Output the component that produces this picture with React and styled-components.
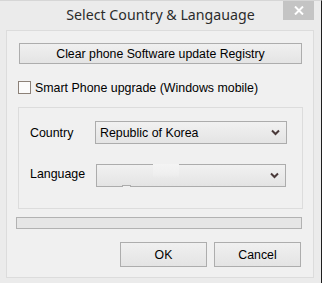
import React from "react"
import styled, { createGlobalStyle } from "styled-components"

const GlobalStyle = createGlobalStyle`
   html, body {
      margin: 0;
      padding: 0;
      background: #ebebeb;
   }
   body {
      font-family: "Liberation Sans", Arial, sans-serif;
      font-size: 12px;
      color: #000;
   }
`

const Window = styled.div`
   width: 322px;
   height: 283px;
   box-sizing: border-box;
   background: #ebebeb;
   border-top: 1px solid #d6d6d6;
   border-right: 1px solid #1e1e1e;
   display: flex;
   flex-direction: column;
`

const TitleBar = styled.div`
   height: 29px;
   display: grid;
   grid-template-columns: 1fr auto 1fr;
   align-items: start;
`

const Title = styled.div`
   grid-column: 2;
   font-family: "Noto Sans", "Open Sans", sans-serif;
   font-size: 14.2px;
   line-height: 20px;
   color: #2b2b2b;
   padding-top: 4px;
`

const CloseButton = styled.div`
   grid-column: 3;
   justify-self: end;
   margin-right: 7px;
   width: 31px;
   height: 19px;
   background: #c4c4c4;
   display: flex;
   align-items: center;
   justify-content: center;
`

const Panel = styled.div`
   margin-left: 6px;
   width: 308px;
   height: 248px;
   box-sizing: border-box;
   background: #f0f0f0;
   border: 1px solid #dcdcdc;
   display: flex;
   flex-direction: column;
`

const Button = styled.div`
   box-sizing: border-box;
   width: ${(p) => p.$w}px;
   height: ${(p) => p.$h}px;
   border: 1px solid #adadad;
   background: linear-gradient(#f0f0f0, #e4e4e4);
   display: flex;
   align-items: center;
   justify-content: center;
   font-size: 12.3px;
   color: #000;
`

const WideButton = styled(Button)`
   margin: 12px 0 0 12px;
`

const CheckRow = styled.label`
   margin: 17px 0 0 11px;
   display: flex;
   align-items: center;
   gap: 4px;
   height: 13px;
   font-size: 12.4px;
`

const Check = styled.span`
   width: 13px;
   height: 13px;
   box-sizing: border-box;
   border: 1px solid #8c8178;
   background: #fbfbfb;
`

const Group = styled.div`
   margin: 13px 0 0 11px;
   width: 285px;
   height: 102px;
   box-sizing: border-box;
   border: 1px solid #dcdcdc;
   display: flex;
   flex-direction: column;
   padding: 13px 0 0 11px;
   gap: 20px;
`

const FieldRow = styled.div`
   display: grid;
   grid-template-columns: ${(p) => p.$labelW}px auto;
   align-items: center;
`

const Label = styled.span`
   font-size: 12.4px;
   padding-bottom: ${(p) => p.$raise || 0}px;
`

const Select = styled.div`
   position: relative;
   box-sizing: border-box;
   width: ${(p) => p.$w}px;
   height: 23px;
   border: 1px solid #acacac;
   background: linear-gradient(#f1f1f1, #e4e4e4);
   display: flex;
   align-items: center;
   justify-content: space-between;
   padding: 0 6px 0 4px;
   font-size: 12.4px;
`

const BorderGap = styled.span`
   position: absolute;
   top: -1px;
   left: 56px;
   width: 26px;
   height: 14px;
   background: linear-gradient(#f4f4f4, #f0f0f0 60%, rgba(240, 240, 240, 0));
`

const Notch = styled.span`
   position: absolute;
   bottom: -1px;
   left: 25px;
   width: 9px;
   height: 2px;
   border-top: 1px solid #acacac;
   border-left: 1px solid #acacac;
   border-right: 1px solid #acacac;
   box-sizing: border-box;
   background: #f0f0f0;
`

const Progress = styled.div`
   margin: 8px 0 0 9px;
   width: 286px;
   height: 12px;
   box-sizing: border-box;
   border: 1px solid #b2b2b2;
   background: #e6e6e6;
`

const Footer = styled.div`
   margin: 13px 0 0 113px;
   display: flex;
   gap: 7px;
`

const Chevron = () => (
   <svg width="9" height="7" viewBox="0 0 9 7">
      <path d="M1 1.5 L4.5 5 L8 1.5" fill="none" stroke="#4a3a3a" strokeWidth="2" />
   </svg>
)

const App = () => {
   return (
      <>
         <GlobalStyle />
         <Window>
            <TitleBar>
               <Title>Select Country &amp; Langauage</Title>
               <CloseButton>
                  <svg width="10" height="9" viewBox="0 0 10 9">
                     <path d="M1 0.5 L9 8.5 M9 0.5 L1 8.5" stroke="#fff" strokeWidth="2" />
                  </svg>
               </CloseButton>
            </TitleBar>
            <Panel>
               <WideButton $w={283} $h={21}>Clear phone Software update Registry</WideButton>
               <CheckRow>
                  <Check />
                  <span>Smart Phone upgrade (Windows mobile)</span>
               </CheckRow>
               <Group>
                  <FieldRow $labelW={65}>
                     <Label>Country</Label>
                     <Select $w={192}>
                        <span>Republic of Korea</span>
                        <Chevron />
                     </Select>
                  </FieldRow>
                  <FieldRow $labelW={66}>
                     <Label $raise={4}>Language</Label>
                     <Select $w={190}>
                        <BorderGap />
                        <Notch />
                        <span />
                        <Chevron />
                     </Select>
                  </FieldRow>
               </Group>
               <Progress />
               <Footer>
                  <Button $w={87} $h={25}>OK</Button>
                  <Button $w={87} $h={25}>Cancel</Button>
               </Footer>
            </Panel>
         </Window>
      </>
   )
}

export default App
